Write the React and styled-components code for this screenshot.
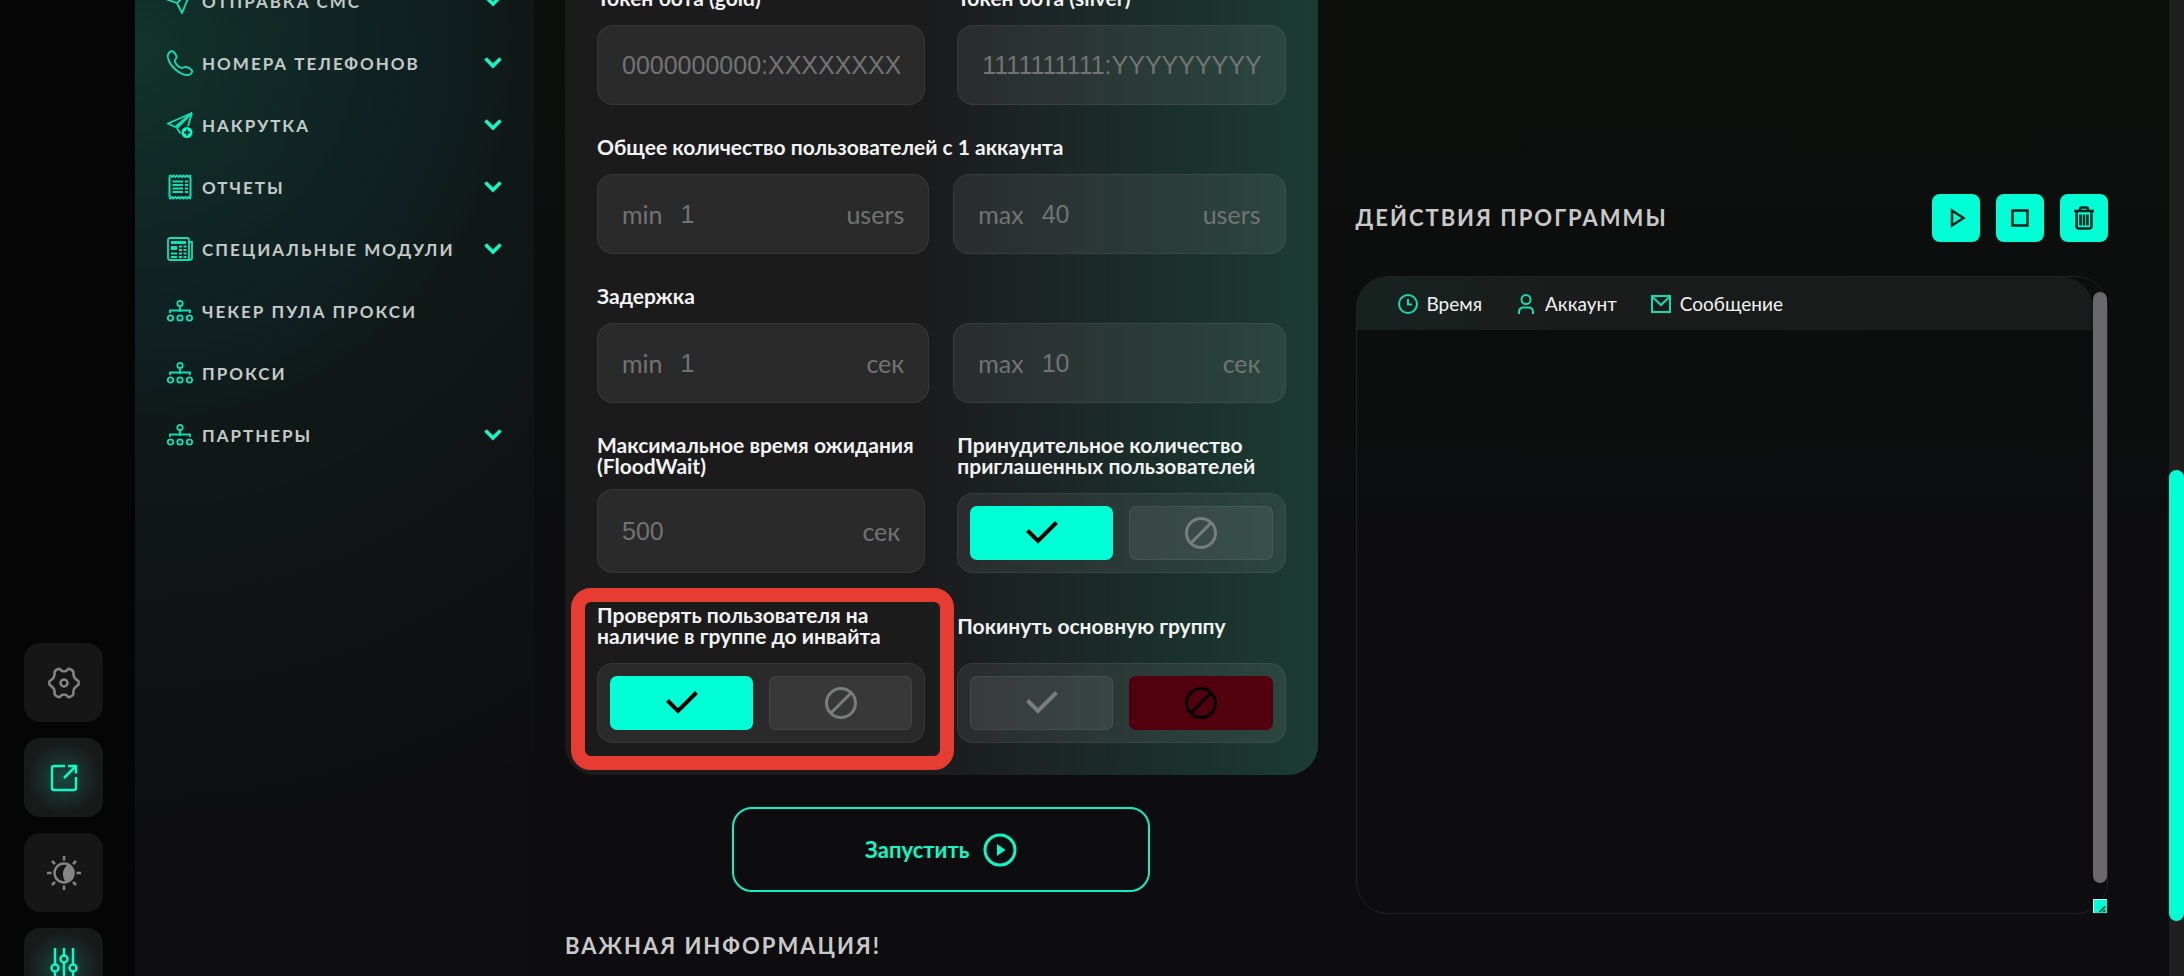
import React, { useState } from "react";
import styled, { createGlobalStyle } from "styled-components";

const menu = [
  { icon: "send", text: "Отправка СМС", open: true },
  { icon: "phone", text: "Номера телефонов", open: true },
  { icon: "boost", text: "Накрутка", open: true },
  { icon: "report", text: "Отчеты", open: true },
  { icon: "news", text: "Специальные модули", open: true },
  { icon: "tree", text: "Чекер пула прокси" },
  { icon: "tree", text: "Прокси" },
  { icon: "tree", text: "Партнеры", open: true },
];

const MenuIcon = ({ name }) => {
  switch (name) {
    case "send":
      return (
        <svg viewBox="0 0 26 26">
          <path d="M1 12 25 1 15 25 10 15Z M10 15 25 1" />
        </svg>
      );
    case "phone":
      return (
        <svg viewBox="0 0 26 26">
          <path d="M1.5 3.5C2.5 1.5 4.5 0.5 6 1.5C8 3 9.5 6 9.5 7.5C9.5 9 7.5 9.5 7.8 11C8.5 13.5 11.5 16.8 14.5 18C16 18.5 17 16.5 18.8 16.8C21 17.2 23.8 18.6 25 20.5C25.6 22.5 23.5 25 21 25.2C13 25 3 16.5 1 8C0.7 6.5 0.8 4.8 1.5 3.5Z" />
        </svg>
      );
    case "boost":
      return (
        <svg viewBox="0 0 26 26">
          <path d="M25 1 1 11.5 8 15 25 1 M25 1 10 16 13.5 21.5 M25 1 21 14" />
          <circle cx="20" cy="20.5" r="5.5" fill="#0dfac8" stroke="none" />
          <path d="M20 17.5V23.5M17 20.5H23" stroke="#10302b" />
        </svg>
      );
    case "report":
      return (
        <svg viewBox="0 0 26 26">
          <path d="M2.5 3V23M23.5 3V23" strokeWidth="2" />
          <path d="M2 2.5 3.5 1.5 5 3 6.7 1.5 8.4 3 10 1.5 11.7 3 13.3 1.5 15 3 16.6 1.5 18.3 3 20 1.5 21.7 3 23 1.5 24 2.5M2 23.5 3.5 24.5 5 23 6.7 24.5 8.4 23 10 24.5 11.7 23 13.3 24.5 15 23 16.6 24.5 18.3 23 20 24.5 21.7 23 23 24.5 24 23.5" />
          <path d="M5.5 7.5H16M5.5 11H16M5.5 14.5H16M5.5 18H16M18 7.5H21M18 11H21M18 14.5H21M18 18H21" />
        </svg>
      );
    case "news":
      return (
        <svg viewBox="0 0 26 26">
          <rect x="1" y="2" width="21" height="22" rx="2" />
          <path d="M22 6H25V22Q25 24 22 24H4" />
          <rect x="4" y="5" width="15" height="3" fill="#0de2b6" stroke="none" />
          <rect x="4" y="10" width="6" height="4" fill="#0de2b6" stroke="none" />
          <path d="M12 10.5H15M12 14H15M12 17.5H15M12 21H15M16.5 10.5H19.5M16.5 14H19.5M16.5 17.5H19.5M16.5 21H19.5M4 17.5H10M4 21H10" />
        </svg>
      );
    default:
      return (
        <svg viewBox="0 0 26 26">
          <circle cx="13" cy="5.5" r="2.7" />
          <circle cx="3.5" cy="20" r="2.7" />
          <circle cx="13" cy="20" r="2.7" />
          <circle cx="22.5" cy="20" r="2.7" />
          <path d="M13 8.5V14M3 15V12.5H23V15" />
        </svg>
      );
  }
};

const CheckIcon = () => (
  <svg width="32" height="24" viewBox="0 0 32 24" fill="none" stroke="currentColor" strokeWidth="4">
    <path d="M1.5 9.5 12 20 30.5 1.5" />
  </svg>
);

const BanIcon = () => (
  <svg width="32" height="32" viewBox="0 0 32 32" fill="none" stroke="currentColor" strokeWidth="3">
    <circle cx="16" cy="16" r="14.5" />
    <path d="M5.7 26.3 26.3 5.7" />
  </svg>
);

const Toggle = ({ id, label, initial, marked }) => {
  const [value, setValue] = useState(initial);
  return (
    <Field role="group" aria-labelledby={id}>
      <Label as="span" id={id}>
        {label}
      </Label>
      <Switch>
        <Choice type="button" aria-label="Да" aria-pressed={value} $on={value} onClick={() => setValue(true)}>
          <CheckIcon />
        </Choice>
        <Choice type="button" aria-label="Нет" aria-pressed={!value} $on={!value} $danger onClick={() => setValue(false)}>
          <BanIcon />
        </Choice>
      </Switch>
      {marked && <Mark />}
    </Field>
  );
};

const Range = ({ id, unit, max }) => (
  <Pair $gap="24px">
    <InputBox>
      <label htmlFor={`${id}-min`}>min</label>
      <input id={`${id}-min`} placeholder="1" />
      <span>{unit}</span>
    </InputBox>
    <InputBox>
      <label htmlFor={`${id}-max`}>max</label>
      <input id={`${id}-max`} placeholder={max} />
      <span>{unit}</span>
    </InputBox>
  </Pair>
);

const App = () => {
  return (
    <Page>
      <GlobalStyle />
      <Rail>
        <RailButton type="button" aria-label="Настройки">
          <svg width="32" height="32" viewBox="0 0 32 32">
            <path d="M11.5 1.8Q13.5 4.5 16 4.5T20.5 1.8Q24.5 2.5 25.5 5Q25 9.5 27 11.3T30.6 14.5V17.5Q29 18.8 27 20.7T25.5 27Q24 29.8 20.5 30.2Q18.5 27.5 16 27.5T11.5 30.2Q8 29.8 6.5 27Q7 22.5 5 20.7T1.4 17.5V14.5Q3 13.2 5 11.3T6.500 5Q8 2.2 11.5 1.8Z" />
            <circle cx="16" cy="16" r="3.5" />
          </svg>
        </RailButton>
        <RailButton type="button" aria-label="Открыть" $active>
          <svg width="28" height="28" viewBox="0 0 28 28">
            <path d="M15 2H4Q2 2 2 4V24Q2 26 4 26H24Q26 26 26 24V13" />
            <path d="M14 14 26 2M18 2H26V9.5" />
          </svg>
        </RailButton>
        <RailButton type="button" aria-label="Тема">
          <svg width="36" height="36" viewBox="0 0 36 36">
            <circle cx="18" cy="18" r="9.5" />
            <path d="M22 9.5A9.5 9.5 0 0 1 20 27.2Q16.5 23 17 18T22 9.5Z" fill="currentColor" stroke="none" />
            <path d="M18 1V5.5M18 30.5V35M1 18H5.5M30.5 18H35M6 6 9 9M27 27 30 30M30 6 27 9M9 27 6 30" />
          </svg>
        </RailButton>
        <RailButton type="button" aria-label="Фильтры" $active>
          <svg width="28" height="40" viewBox="0 0 28 40">
            <path d="M5 0V16M5 24V40M14 0V7M14 15V40M23 0V16M23 24V40" />
            <circle cx="5" cy="20" r="3.5" />
            <circle cx="14" cy="11" r="3.5" />
            <circle cx="23" cy="20" r="3.5" />
          </svg>
        </RailButton>
      </Rail>

      <Sidebar>
        {menu.map((item) => (
          <MenuItem href="#" key={item.text}>
            <MenuIcon name={item.icon} />
            <span>{item.text}</span>
            {item.open && (
              <Chevron viewBox="0 0 18 12">
                <path d="M1.5 1.5 9 9 16.5 1.5" />
              </Chevron>
            )}
          </MenuItem>
        ))}
      </Sidebar>

      <Content>
        <Column>
          <Card>
            <Pair $gap="32px">
              <Field>
                <Label htmlFor="gold">Токен бота (gold)</Label>
                <InputBox>
                  <input id="gold" placeholder="0000000000:XXXXXXXXXXXXXXXX" />
                </InputBox>
              </Field>
              <Field>
                <Label htmlFor="silver">Токен бота (silver)</Label>
                <InputBox>
                  <input id="silver" placeholder="1111111111:YYYYYYYYYYYYYYYY" />
                </InputBox>
              </Field>
            </Pair>
            <Field>
              <Label as="span">Общее количество пользователей с 1 аккаунта</Label>
              <Range id="users" unit="users" max="40" />
            </Field>
            <Field>
              <Label as="span">Задержка</Label>
              <Range id="delay" unit="сек" max="10" />
            </Field>
            <Pair $gap="32px">
              <Field $tight>
                <Label htmlFor="wait">Максимальное время ожидания (FloodWait)</Label>
                <InputBox $tall>
                  <input id="wait" placeholder="500" />
                  <span>сек</span>
                </InputBox>
              </Field>
              <Toggle id="force" label="Принудительное количество приглашенных пользователей" initial={true} />
            </Pair>
            <Pair $gap="32px">
              <Toggle id="check" label="Проверять пользователя на наличие в группе до инвайта" initial={true} marked />
              <Toggle id="leave" label="Покинуть основную группу" initial={false} />
            </Pair>
          </Card>
          <StartButton type="button">
            Запустить
            <svg width="34" height="34" viewBox="0 0 34 34">
              <circle cx="17" cy="17" r="15" fill="none" stroke="currentColor" strokeWidth="3" />
              <path d="M14 11V23L22.5 17Z" fill="currentColor" />
            </svg>
          </StartButton>
          <Title>Важная информация!</Title>
        </Column>

        <LogColumn>
          <LogTop>
            <Title>Действия программы</Title>
            <Actions>
              <ActionButton type="button" aria-label="Старт">
                <svg viewBox="0 0 24 24">
                  <path d="M8 4.5V19.5L19.5 12Z" />
                </svg>
              </ActionButton>
              <ActionButton type="button" aria-label="Стоп">
                <svg viewBox="0 0 24 24">
                  <rect x="4.5" y="4.5" width="15" height="15" />
                </svg>
              </ActionButton>
              <ActionButton type="button" aria-label="Удалить">
                <svg viewBox="0 0 24 24">
                  <path d="M2 5H22M8 5V3Q8 1.5 10 1.5H14Q16 1.5 16 3V5M4.500 5V20Q4.5 22.5 7 22.5H17Q19.5 22.5 19.5 20V5M8.5 8.5V19.5M12 8.5V19.5M15.5 8.5V19.5" />
                </svg>
              </ActionButton>
            </Actions>
          </LogTop>
          <LogBox>
            <LogTable>
              <thead>
                <tr>
                  <th>
                    <svg viewBox="0 0 20 20">
                      <circle cx="10" cy="10" r="9" />
                      <path d="M10 5V10.5H14" />
                    </svg>
                    Время
                  </th>
                  <th>
                    <svg viewBox="0 0 20 20">
                      <circle cx="10" cy="5.5" r="4.5" />
                      <path d="M3 20V18Q3 13.5 7.5 13.5H12.5Q17 13.5 17 18V20" />
                    </svg>
                    Аккаунт
                  </th>
                  <th>
                    <svg viewBox="0 0 20 20">
                      <path d="M1 2H19V18H1ZM1 2.5 10 11 19 2.5" />
                    </svg>
                    Сообщение
                  </th>
                </tr>
              </thead>
            </LogTable>
            <LogScroll>
              <i />
              <Grip viewBox="0 0 14 14">
                <path d="M6 13 12 7M10 13 12 11" />
              </Grip>
            </LogScroll>
          </LogBox>
        </LogColumn>
      </Content>

      <PageScroll>
        <i />
      </PageScroll>
    </Page>
  );
};

const GlobalStyle = createGlobalStyle`
  * {
    box-sizing: border-box;
  }
  body {
    margin: 0;
    background: #0d0d0f;
    font-family: Lato, "Open Sans", sans-serif;
    color: #f1f3f2;
  }
  button, input {
    font-family: inherit;
  }
  button {
    cursor: pointer;
  }
`;
const Page = styled.div`
  display: flex;
  height: 100vh;
  overflow: hidden;
  background: linear-gradient(#0c0f0c 0%, #0c0e0d 35%, #0d0d0f 60%);
`;
const Rail = styled.nav`
  width: 135px;
  flex-shrink: 0;
  padding: 643px 0 0 24px;
  display: flex;
  flex-direction: column;
  gap: 16px;
  background: #050505;
`;
const RailButton = styled.button`
  width: 79px;
  height: 79px;
  flex-shrink: 0;
  display: flex;
  align-items: center;
  justify-content: center;
  border: none;
  border-radius: 16px;
  color: ${(p) => (p.$active ? "#0dfac8" : "#858585")};
  background: ${(p) =>
    p.$active
      ? "radial-gradient(circle, #174a3f 0, #19332d 16px, #181a19 36px)"
      : "#161616"};

  svg {
    fill: none;
    stroke: currentColor;
    stroke-width: 2.5;
  }
`;
const Sidebar = styled.nav`
  width: 399px;
  flex-shrink: 0;
  background: radial-gradient(
    circle at 0 5%,
    #12332c 0,
    #102a26 130px,
    #102223 240px,
    #0f1f22 300px,
    #101917 380px,
    #101315 560px,
    #0e0e10 820px
  );

  a:first-child {
    margin-top: -30px;
  }
`;
const MenuItem = styled.a`
  height: 62px;
  padding: 0 32px;
  display: flex;
  align-items: center;
  gap: 9px;
  color: #c4cac8;
  font-size: 17px;
  font-weight: 700;
  letter-spacing: 2px;
  text-transform: uppercase;
  text-decoration: none;

  span {
    flex: 1;
    white-space: nowrap;
  }
  svg {
    width: 26px;
    height: 26px;
    fill: none;
    stroke: #0de2b6;
    stroke-width: 1.8;
  }
`;
const Chevron = styled.svg`
  && {
    width: 18px;
    height: 12px;
    stroke: #0dfac8;
    stroke-width: 3.5;
  }
`;
const Content = styled.main`
  flex: 1;
  min-width: 0;
  padding: 0 61px 0 31px;
  display: grid;
  grid-template-columns: minmax(0, 1fr) minmax(0, 1fr);
  gap: 38px;
`;
const Column = styled.section`
  display: flex;
  flex-direction: column;
  margin-top: -45px;
`;
const Card = styled.form`
  padding: 32px;
  display: flex;
  flex-direction: column;
  gap: 31px;
  border-radius: 0 0 30px 30px;
  background: linear-gradient(
    90deg,
    #1b1b1c 0%,
    #1b1b1c 48%,
    #1c2424 62%,
    #1b322c 84%,
    #1b3c33 100%
  );
`;
const Pair = styled.div`
  display: grid;
  grid-template-columns: minmax(0, 1fr) minmax(0, 1fr);
  gap: ${(p) => p.$gap};
  align-items: end;
`;
const Field = styled.div`
  position: relative;
  display: flex;
  flex-direction: column;
  justify-content: flex-end;
  gap: ${(p) => (p.$tight ? "13px" : "17px")};
`;
const Label = styled.label`
  font-size: 21px;
  font-weight: 700;
  line-height: 21px;

  [role="group"] > & {
    min-height: 42px;
    display: flex;
    align-items: center;
  }
`;
const InputBox = styled.div`
  height: ${(p) => (p.$tall ? "84px" : "80px")};
  padding: 0 24px;
  display: flex;
  align-items: center;
  gap: 18px;
  border: 1px solid rgba(255, 255, 255, 0.07);
  border-radius: 16px;
  background: rgba(255, 255, 255, 0.065);
  color: #717473;
  font-size: 25px;

  input {
    flex: 1;
    min-width: 0;
    padding: 0;
    border: none;
    outline: none;
    background: none;
    color: #f1f3f2;
    font-family: "Liberation Sans", Arial, sans-serif;
    font-size: 25px;
  }
  input::placeholder {
    color: #717473;
  }
`;
const Switch = styled.div`
  height: 80px;
  padding: 12px;
  display: flex;
  gap: 16px;
  border: 1px solid rgba(255, 255, 255, 0.07);
  border-radius: 16px;
  background: rgba(255, 255, 255, 0.065);
`;
const Choice = styled.button`
  flex: 1;
  padding: 0;
  display: flex;
  align-items: center;
  justify-content: center;
  border-radius: 7px;
  border: 1px solid ${(p) => (p.$on ? "transparent" : "rgba(255, 255, 255, 0.07)")};
  color: ${(p) => (p.$on ? "#000" : "#7b7d7d")};
  background: ${(p) =>
    p.$on ? (p.$danger ? "#52000e" : "#00ffd5") : "rgba(255, 255, 255, 0.065)"};
`;
const Mark = styled.div`
  position: absolute;
  z-index: 1;
  inset: -16px -29px -27px -26px;
  border: 14px solid #e63c32;
  border-radius: 20px;
  pointer-events: none;
`;
const StartButton = styled.button`
  width: 418px;
  height: 85px;
  flex-shrink: 0;
  margin: 32px auto 41px;
  display: flex;
  align-items: center;
  justify-content: center;
  gap: 14px;
  border: 2px solid #12eec2;
  border-radius: 20px;
  background: transparent;
  color: #0dfac8;
  font-size: 22px;
  font-weight: 700;
`;
const Title = styled.h2`
  margin: 0;
  color: #c9c9c9;
  font-size: 22px;
  font-weight: 700;
  line-height: 26px;
  letter-spacing: 2px;
  text-transform: uppercase;
`;
const LogColumn = styled.section`
  padding-top: 194px;
`;
const LogTop = styled.div`
  display: flex;
  align-items: center;
  justify-content: space-between;
  margin-bottom: 34px;
`;
const Actions = styled.div`
  display: flex;
  gap: 16px;
`;
const ActionButton = styled.button`
  width: 48px;
  height: 48px;
  display: flex;
  align-items: center;
  justify-content: center;
  padding: 0;
  border: none;
  border-radius: 8px;
  background: #00ffd5;

  svg {
    width: 24px;
    height: 24px;
    fill: none;
    stroke: #07231d;
    stroke-width: 2.5;
  }
`;
const LogBox = styled.div`
  height: 638px;
  display: flex;
  align-items: stretch;
  border: 1px solid #222424;
  border-radius: 32px;
`;
const LogTable = styled.table`
  flex: 1;
  display: block;
  border-spacing: 0;

  thead {
    display: block;
    padding-left: 41px;
    border-radius: 31px 31px 0 0;
    background: linear-gradient(90deg, #182320 0, #1a1c1b 200px, #191b1a 100%);
  }
  tr {
    height: 53px;
    display: flex;
    align-items: center;
    gap: 34px;
  }
  th {
    padding: 0;
    display: flex;
    align-items: center;
    gap: 9px;
    font-size: 19px;
    font-weight: 400;
  }
  svg {
    width: 20px;
    height: 20px;
    fill: none;
    stroke: #12dcb3;
    stroke-width: 2;
  }
`;
const LogScroll = styled.div`
  width: 14px;
  padding-top: 15px;
  display: flex;
  flex-direction: column;
  gap: 16px;

  i {
    flex: 1;
    border-radius: 7px;
    background: #6a686a;
  }
`;
const Grip = styled.svg`
  width: 14px;
  height: 14px;
  background: #00ffd5;
  border-top: 1px solid #d6f5ef;
  border-left: 1px solid #d6f5ef;
  fill: none;
  stroke: #1b5248;
  stroke-width: 2;
`;
const PageScroll = styled.div`
  width: 15px;
  flex-shrink: 0;
  padding-top: 470px;
  background: #201f20;

  i {
    display: block;
    height: 451px;
    border-radius: 8px;
    background: #00ffd5;
  }
`;

export default App;
